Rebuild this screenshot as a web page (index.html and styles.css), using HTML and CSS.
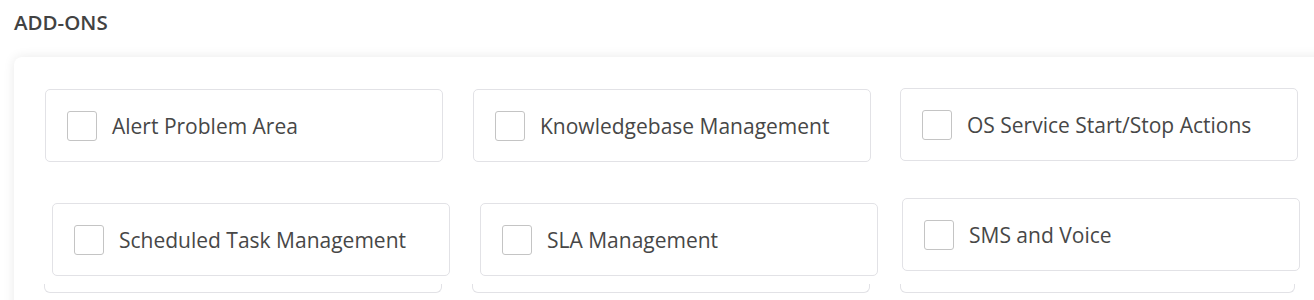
FILE: index.html
```html
<!DOCTYPE html>
<html lang="en">
<head>
<meta charset="utf-8">
<title>Add-ons</title>
<link rel="stylesheet" href="styles.css">
</head>
<body>
  <div class="page">
    <h2 class="section-title">ADD-ONS</h2>
    <div class="panel">
      <div class="addon-grid">
        <label class="card"><span class="checkbox"></span><span class="card-label">Alert Problem Area</span></label>
        <label class="card"><span class="checkbox"></span><span class="card-label">Knowledgebase Management</span></label>
        <label class="card card--up1"><span class="checkbox"></span><span class="card-label">OS Service Start/Stop Actions</span></label>
        <label class="card card--right7"><span class="checkbox"></span><span class="card-label">Scheduled Task Management</span></label>
        <label class="card card--right7"><span class="checkbox"></span><span class="card-label">SLA Management</span></label>
        <label class="card card--lifted"><span class="checkbox"></span><span class="card-label">SMS and Voice</span></label>
        <div class="stub stub--left1"></div>
        <div class="stub stub--left1"></div>
        <div class="stub stub--narrow"></div>
      </div>
    </div>
  </div>
</body>
</html>
```

FILE: styles.css
```css
html, body {
  margin: 0;
  padding: 0;
  background: #ffffff;
  overflow: hidden;
}

.page {
  padding: 9px 0 0 14px;
  font-family: "Open Sans", "Noto Sans", sans-serif;
  color: #444444;
}

.section-title {
  margin: 0 0 21px 0;
  font-size: 20.5px;
  font-weight: 600;
  line-height: 27px;
  color: #424242;
}

.panel {
  width: 1330px;
  height: 260px;
  background: #ffffff;
  border-radius: 8px;
  box-shadow: 0 0 12px rgba(0, 0, 0, 0.09);
  box-sizing: border-box;
  padding: 32px 0 0 31px;
}

.addon-grid {
  display: grid;
  grid-template-columns: 398px 398px 398px;
  column-gap: 30px;
  row-gap: 41px;
  align-items: start;
}

.card {
  display: flex;
  align-items: center;
  gap: 15px;
  height: 73px;
  box-sizing: border-box;
  padding: 0 0 0 21px;
  border: 1px solid #e2e2e6;
  border-radius: 5px;
  background: #ffffff;
  cursor: pointer;
}

.card--up1 {
  margin-top: -1px;
  margin-left: -1px;
  margin-right: 1px;
}

.card--right7 {
  margin-left: 7px;
  margin-right: -7px;
}

.card--lifted {
  margin-top: -5px;
  margin-left: 1px;
  margin-right: -1px;
}

.checkbox {
  flex: 0 0 auto;
  width: 30px;
  height: 30px;
  box-sizing: border-box;
  border: 1px solid #c4c4c4;
  border-radius: 3px;
  background: #ffffff;
}

.card-label {
  font-size: 21px;
  line-height: 28px;
  color: #474747;
}

.stub {
  height: 9px;
  margin-top: -33px;
  box-sizing: border-box;
  border: 1px solid #e2e2e6;
  border-top: none;
  border-radius: 0 0 6px 6px;
}

.stub--left1 {
  margin-left: -1px;
  margin-right: 1px;
}

.stub--narrow {
  margin-left: -1px;
  margin-right: 4px;
}
```
